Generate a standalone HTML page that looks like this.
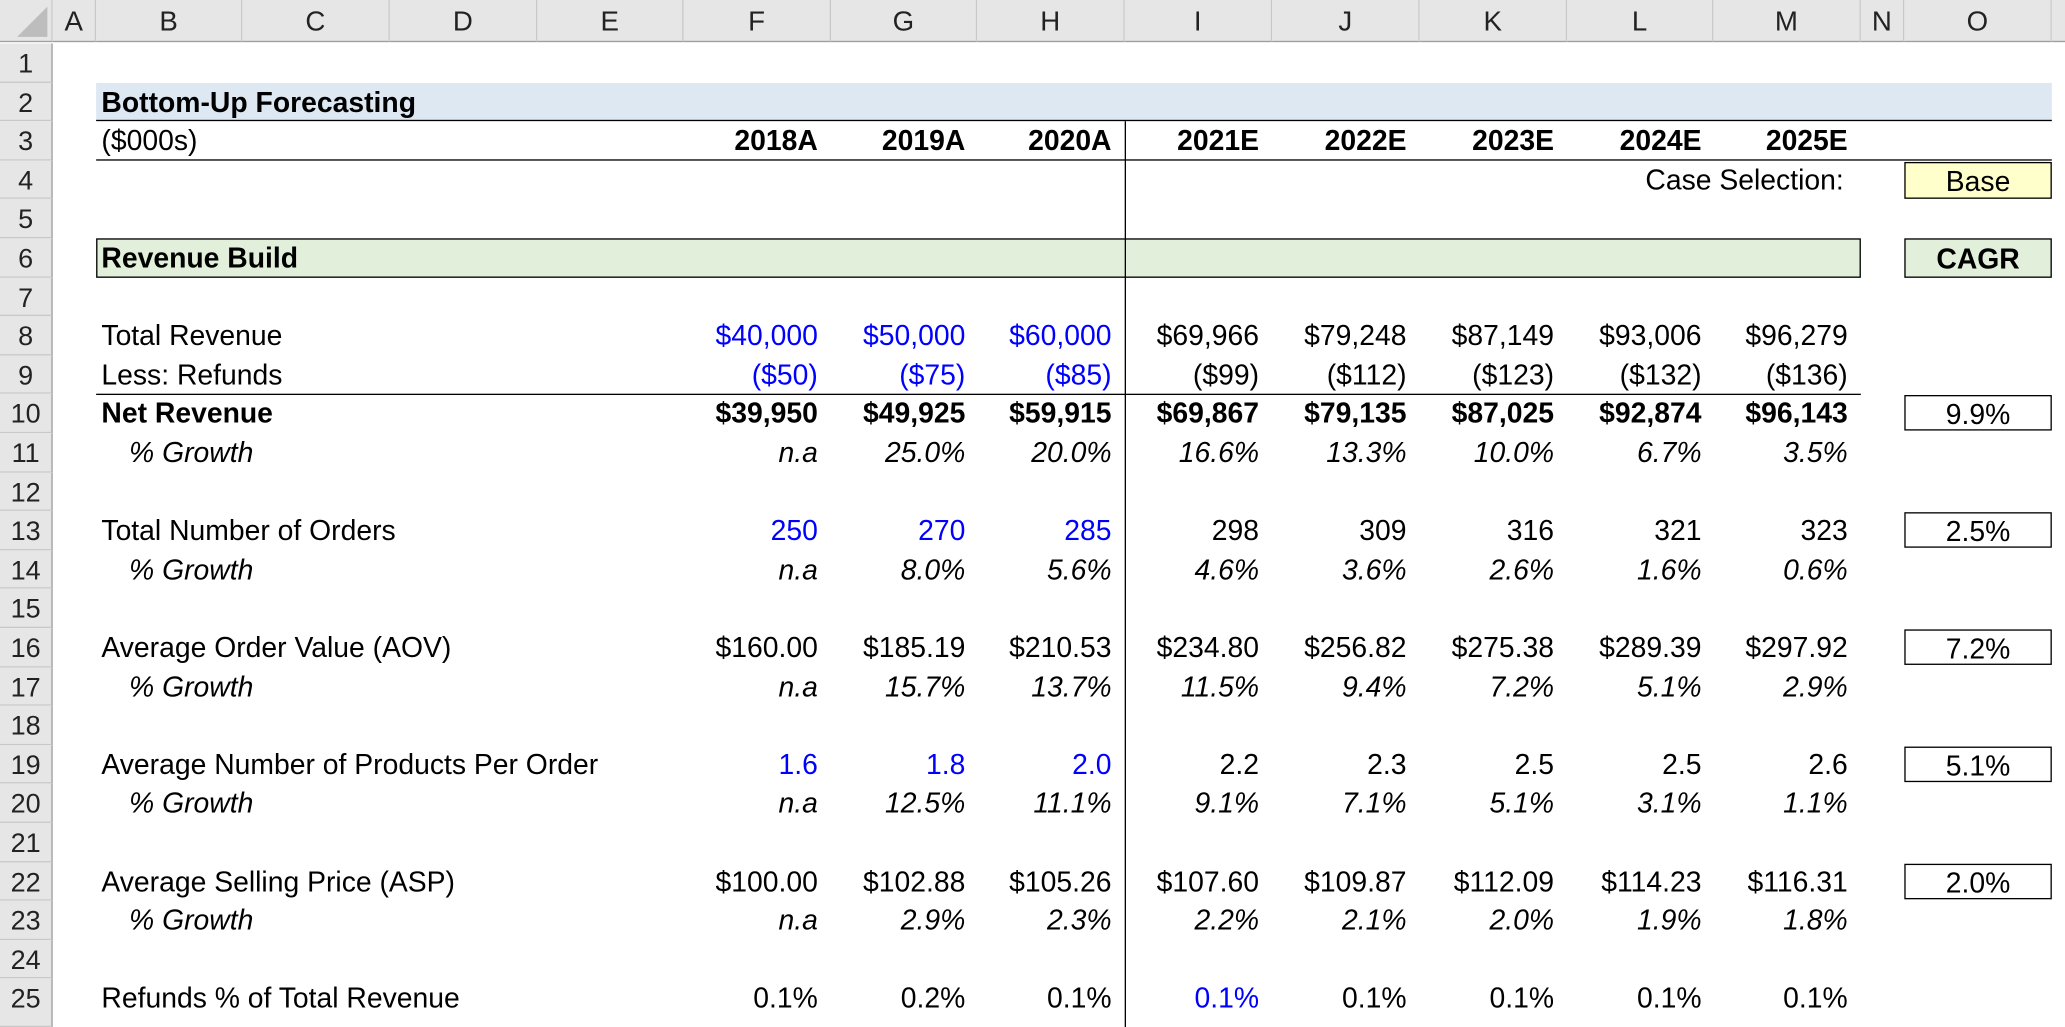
<!DOCTYPE html>
<html><head><meta charset="utf-8"><style>
html,body{margin:0;padding:0;background:#fff;overflow:hidden;width:2065px;height:1027px}
#w{position:absolute;left:0;top:0;width:1568px;height:780px;transform:scale(1.31696,1.3167);transform-origin:0 0;font-family:"Liberation Sans",Arial,sans-serif;font-size:21.5px;color:#000;overflow:hidden}
.hd{position:absolute;top:0;height:32px;background:#e6e6e6;border-bottom:1px solid #9e9e9e;border-right:1px solid #c8c8c8;box-sizing:border-box;text-align:center;line-height:34px;font-size:21px;color:#222}
.rh{position:absolute;left:0;width:40px;height:29.6px;background:#e6e6e6;border-bottom:1px solid #c8c8c8;border-right:1px solid #9e9e9e;box-sizing:border-box;text-align:center;line-height:31px;font-size:20.5px;color:#222}
.r{position:absolute;left:0;width:1568px;height:29.6px;line-height:31px}
.r div{position:absolute;top:0;height:29.6px;white-space:nowrap}
.l{left:77px}.i{left:98px;font-style:italic}
.v{width:112px;text-align:right;padding-right:10px;box-sizing:border-box}
.F{left:519px}.G{left:631px}.H{left:742px}.I{left:854px}.J{left:966px}.K{left:1078px}.L{left:1190px}.M{left:1301px}
.b{font-weight:bold}.it{font-style:italic}.bl{color:#0000ff}
.box{left:1446px;width:112px;border:1px solid #000;box-sizing:border-box;text-align:center;height:27px!important;top:1px!important;line-height:28px}
</style></head><body><div id="w">
<div class="hd" style="left:0;width:40px"><svg width="40" height="32" style="position:absolute;left:0;top:0"><polygon points="36,5 36,28 13,28" fill="#bdbdbd"/></svg></div>
<div class="hd" style="left:40px;width:33px">A</div>
<div class="hd" style="left:73px;width:111px">B</div>
<div class="hd" style="left:184px;width:112px">C</div>
<div class="hd" style="left:296px;width:112px">D</div>
<div class="hd" style="left:408px;width:111px">E</div>
<div class="hd" style="left:519px;width:112px">F</div>
<div class="hd" style="left:631px;width:111px">G</div>
<div class="hd" style="left:742px;width:112px">H</div>
<div class="hd" style="left:854px;width:112px">I</div>
<div class="hd" style="left:966px;width:112px">J</div>
<div class="hd" style="left:1078px;width:112px">K</div>
<div class="hd" style="left:1190px;width:111px">L</div>
<div class="hd" style="left:1301px;width:112px">M</div>
<div class="hd" style="left:1413px;width:33px">N</div>
<div class="hd" style="left:1446px;width:112px">O</div>
<div class="hd" style="left:1558px;width:10px;border-right:none"></div>

<div class="rh" style="top:33px">1</div><div class="rh" style="top:62.6px">2</div><div class="rh" style="top:92.2px">3</div><div class="rh" style="top:121.8px">4</div><div class="rh" style="top:151.4px">5</div><div class="rh" style="top:181px">6</div><div class="rh" style="top:210.6px">7</div><div class="rh" style="top:240.2px">8</div><div class="rh" style="top:269.8px">9</div><div class="rh" style="top:299.4px">10</div><div class="rh" style="top:329px">11</div><div class="rh" style="top:358.6px">12</div><div class="rh" style="top:388.2px">13</div><div class="rh" style="top:417.8px">14</div><div class="rh" style="top:447.4px">15</div><div class="rh" style="top:477px">16</div><div class="rh" style="top:506.6px">17</div><div class="rh" style="top:536.2px">18</div><div class="rh" style="top:565.8px">19</div><div class="rh" style="top:595.4px">20</div><div class="rh" style="top:625px">21</div><div class="rh" style="top:654.6px">22</div><div class="rh" style="top:684.2px">23</div><div class="rh" style="top:713.8px">24</div><div class="rh" style="top:743.4px;height:36.6px">25</div>

<div style="position:absolute;left:73px;top:62.6px;width:1485px;height:29.6px;background:#dde8f3;border-bottom:1px solid #000;box-sizing:border-box"></div>
<div style="position:absolute;left:73px;top:121px;width:1485px;height:1px;background:#000"></div>
<div style="position:absolute;left:73px;top:181px;width:1340px;height:30px;background:#e2efda;border:1px solid #000;box-sizing:border-box"></div>
<div style="position:absolute;left:73px;top:299px;width:1340px;height:1px;background:#000"></div>
<div style="position:absolute;left:854px;top:92px;width:1px;height:688px;background:#000"></div>
<div style="position:absolute;left:1446px;top:122.5px;width:112px;height:28px;background:#ffffcc;border:1px solid #000;box-sizing:border-box;text-align:center;line-height:28px">Base</div>
<div style="position:absolute;left:1446px;top:181px;width:112px;height:30px;background:#e2efda;border:1px solid #000;box-sizing:border-box;text-align:center;line-height:31px;font-weight:bold">CAGR</div>

<div class="r" style="top:62.6px"><div class="l b">Bottom-Up Forecasting</div></div>
<div class="r" style="top:92.2px"><div class="l">($000s)</div><div class="v F b">2018A</div><div class="v G b">2019A</div><div class="v H b">2020A</div><div class="v I b">2021E</div><div class="v J b">2022E</div><div class="v K b">2023E</div><div class="v L b">2024E</div><div class="v M b">2025E</div></div>
<div class="r" style="top:121.8px"><div style="right:168px">Case Selection:</div></div>
<div class="r" style="top:181px"><div class="l b">Revenue Build</div></div>

<div class="r" style="top:240.2px"><div class="l">Total Revenue</div><div class="v F bl">$40,000</div><div class="v G bl">$50,000</div><div class="v H bl">$60,000</div><div class="v I">$69,966</div><div class="v J">$79,248</div><div class="v K">$87,149</div><div class="v L">$93,006</div><div class="v M">$96,279</div></div>
<div class="r" style="top:269.8px"><div class="l">Less: Refunds</div><div class="v F bl">($50)</div><div class="v G bl">($75)</div><div class="v H bl">($85)</div><div class="v I">($99)</div><div class="v J">($112)</div><div class="v K">($123)</div><div class="v L">($132)</div><div class="v M">($136)</div></div>
<div class="r b" style="top:299.4px"><div class="l">Net Revenue</div><div class="v F">$39,950</div><div class="v G">$49,925</div><div class="v H">$59,915</div><div class="v I">$69,867</div><div class="v J">$79,135</div><div class="v K">$87,025</div><div class="v L">$92,874</div><div class="v M">$96,143</div><div class="box" style="font-weight:normal">9.9%</div></div>
<div class="r it" style="top:329px"><div class="i">% Growth</div><div class="v F">n.a</div><div class="v G">25.0%</div><div class="v H">20.0%</div><div class="v I">16.6%</div><div class="v J">13.3%</div><div class="v K">10.0%</div><div class="v L">6.7%</div><div class="v M">3.5%</div></div>

<div class="r" style="top:388.2px"><div class="l">Total Number of Orders</div><div class="v F bl">250</div><div class="v G bl">270</div><div class="v H bl">285</div><div class="v I">298</div><div class="v J">309</div><div class="v K">316</div><div class="v L">321</div><div class="v M">323</div><div class="box">2.5%</div></div>
<div class="r it" style="top:417.8px"><div class="i">% Growth</div><div class="v F">n.a</div><div class="v G">8.0%</div><div class="v H">5.6%</div><div class="v I">4.6%</div><div class="v J">3.6%</div><div class="v K">2.6%</div><div class="v L">1.6%</div><div class="v M">0.6%</div></div>

<div class="r" style="top:477px"><div class="l">Average Order Value (AOV)</div><div class="v F">$160.00</div><div class="v G">$185.19</div><div class="v H">$210.53</div><div class="v I">$234.80</div><div class="v J">$256.82</div><div class="v K">$275.38</div><div class="v L">$289.39</div><div class="v M">$297.92</div><div class="box">7.2%</div></div>
<div class="r it" style="top:506.6px"><div class="i">% Growth</div><div class="v F">n.a</div><div class="v G">15.7%</div><div class="v H">13.7%</div><div class="v I">11.5%</div><div class="v J">9.4%</div><div class="v K">7.2%</div><div class="v L">5.1%</div><div class="v M">2.9%</div></div>

<div class="r" style="top:565.8px"><div class="l">Average Number of Products Per Order</div><div class="v F bl">1.6</div><div class="v G bl">1.8</div><div class="v H bl">2.0</div><div class="v I">2.2</div><div class="v J">2.3</div><div class="v K">2.5</div><div class="v L">2.5</div><div class="v M">2.6</div><div class="box">5.1%</div></div>
<div class="r it" style="top:595.4px"><div class="i">% Growth</div><div class="v F">n.a</div><div class="v G">12.5%</div><div class="v H">11.1%</div><div class="v I">9.1%</div><div class="v J">7.1%</div><div class="v K">5.1%</div><div class="v L">3.1%</div><div class="v M">1.1%</div></div>

<div class="r" style="top:654.6px"><div class="l">Average Selling Price (ASP)</div><div class="v F">$100.00</div><div class="v G">$102.88</div><div class="v H">$105.26</div><div class="v I">$107.60</div><div class="v J">$109.87</div><div class="v K">$112.09</div><div class="v L">$114.23</div><div class="v M">$116.31</div><div class="box">2.0%</div></div>
<div class="r it" style="top:684.2px"><div class="i">% Growth</div><div class="v F">n.a</div><div class="v G">2.9%</div><div class="v H">2.3%</div><div class="v I">2.2%</div><div class="v J">2.1%</div><div class="v K">2.0%</div><div class="v L">1.9%</div><div class="v M">1.8%</div></div>

<div class="r" style="top:743.4px"><div class="l">Refunds % of Total Revenue</div><div class="v F">0.1%</div><div class="v G">0.2%</div><div class="v H">0.1%</div><div class="v I bl">0.1%</div><div class="v J">0.1%</div><div class="v K">0.1%</div><div class="v L">0.1%</div><div class="v M">0.1%</div></div>
</div></body></html>
